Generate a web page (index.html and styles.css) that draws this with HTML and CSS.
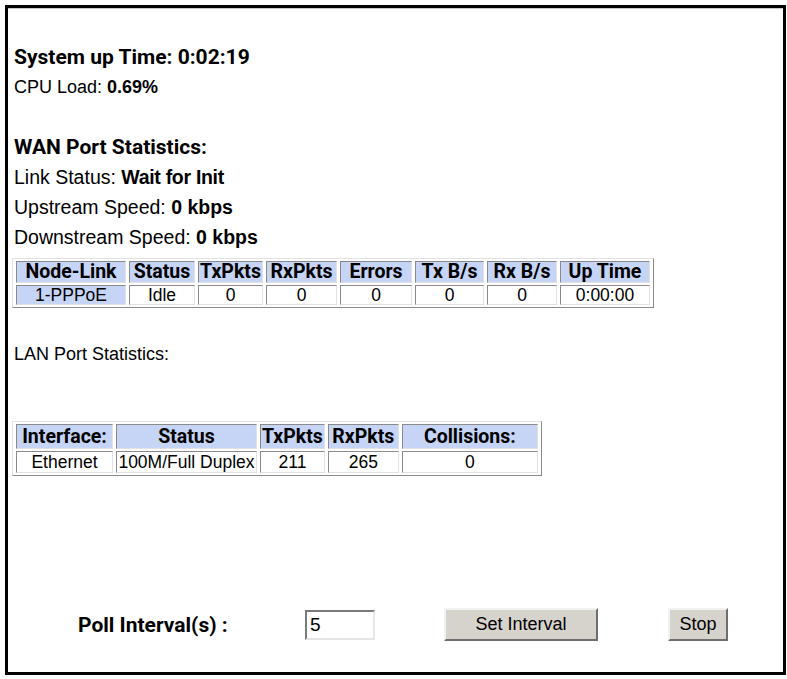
FILE: index.html
```html
<!DOCTYPE html>
<html lang="en">

<head>
    <meta charset="UTF-8">
    <title>Status</title>
    <link rel="stylesheet" href="styles.css">
</head>

<body>
    <div class="quadro">
        <p class="titulo">System up Time: 0:02:19</p>
        <p class="linha pequena">CPU Load: <b>0.69%</b></p>
        <p class="titulo espaco">WAN Port Statistics:</p>
        <p class="linha">Link Status: <b class="forte">Wait for Init</b></p>
        <p class="linha">Upstream Speed: <b>0 kbps</b></p>
        <p class="linha">Downstream Speed: <b>0 kbps</b></p>
        <table class="tabela">
            <thead>
                <tr>
                    <th class="w110">Node-Link</th>
                    <th class="w66">Status</th>
                    <th class="w65">TxPkts</th>
                    <th class="w71">RxPkts</th>
                    <th class="w72">Errors</th>
                    <th class="w69">Tx B/s</th>
                    <th class="w70">Rx B/s</th>
                    <th class="w90">Up Time</th>
                </tr>
            </thead>
            <tbody>
                <tr>
                    <td class="azul">1-PPPoE</td>
                    <td>Idle</td>
                    <td>0</td>
                    <td>0</td>
                    <td>0</td>
                    <td>0</td>
                    <td>0</td>
                    <td>0:00:00</td>
                </tr>
            </tbody>
        </table>
        <p class="linha pequena lan">LAN Port Statistics:</p>
        <table class="tabela tabela-lan">
            <thead>
                <tr>
                    <th class="w97">Interface:</th>
                    <th class="w141">Status</th>
                    <th class="w63">TxPkts</th>
                    <th class="w71">RxPkts</th>
                    <th class="w136">Collisions:</th>
                </tr>
            </thead>
            <tbody>
                <tr>
                    <td>Ethernet</td>
                    <td>100M/Full Duplex</td>
                    <td>211</td>
                    <td>265</td>
                    <td>0</td>
                </tr>
            </tbody>
        </table>
        <div class="poll">
            <span class="poll-rotulo">Poll Interval(s) :</span>
            <input type="text" class="poll-campo" value="5">
            <button class="botao botao-intervalo">Set Interval</button>
            <button class="botao botao-parar">Stop</button>
        </div>
    </div>
</body>

</html>
```

FILE: styles.css
```css
body {
    margin: 0;
    background-color: #fff;
    font-family: "Liberation Sans", Arial, sans-serif;
    color: #000;
}

.quadro {
    box-sizing: border-box;
    width: 781px;
    height: 670px;
    margin: 5px 0 0 5px;
    padding: 34px 0 0 4px;
    border: 3px solid #000;
    box-shadow: inset 0 1px 0 #c8c8c8;
}

p {
    margin: 0;
    padding-left: 2px;
}

.titulo {
    font-family: Roboto, "Liberation Sans", sans-serif;
    font-size: 21px;
    font-weight: bold;
    line-height: 30px;
}

.espaco {
    margin-top: 30px;
}

.linha {
    font-size: 19.5px;
    line-height: 30px;
}

.pequena {
    font-size: 18px;
}

.forte {
    letter-spacing: -0.3px;
}

.lan {
    margin-top: 31px;
}

.tabela {
    margin-top: 6px;
    border-collapse: separate;
    border-spacing: 3px 2px;
    border: 1px solid;
    border-color: #e2e2e2 #8a8a8a #8a8a8a #e2e2e2;
}

.tabela th,
.tabela td {
    box-sizing: border-box;
    padding: 0 1px;
    border: 1px solid;
    border-color: #8a8a8a #e2e2e2 #e2e2e2 #8a8a8a;
    text-align: center;
    white-space: nowrap;
}

.tabela th {
    height: 22px;
    background-color: #c6d4f6;
    font-family: Roboto, "Liberation Sans", sans-serif;
    font-size: 19.5px;
    line-height: 20px;
}

.tabela td {
    height: 20px;
    font-size: 17.5px;
    line-height: 18px;
}

.tabela .azul {
    background-color: #c6d4f6;
}

.tabela-lan {
    margin-top: 52px;
}

.tabela-lan th {
    height: 25px;
}

.tabela-lan td {
    height: 22px;
}

.w63 { width: 63px; }
.w65 { width: 65px; }
.w66 { width: 66px; }
.w69 { width: 69px; }
.w70 { width: 70px; }
.w71 { width: 71px; }
.w72 { width: 72px; }
.w90 { width: 90px; }
.w97 { width: 97px; }
.w110 { width: 110px; }
.w136 { width: 136px; }
.w141 { width: 141px; }

.poll {
    display: flex;
    align-items: center;
    margin-top: 132px;
    padding-left: 66px;
}

.poll-rotulo {
    width: 227px;
    font-family: Roboto, "Liberation Sans", sans-serif;
    font-size: 21px;
    font-weight: bold;
}

.poll-campo {
    box-sizing: border-box;
    width: 70px;
    height: 30px;
    padding: 0 3px;
    border: 2px solid;
    border-color: #7a7a7a #e6e6e6 #e6e6e6 #7a7a7a;
    font-family: "Liberation Sans", Arial, sans-serif;
    font-size: 19px;
}

.botao {
    box-sizing: border-box;
    height: 33px;
    padding: 0;
    background-color: #d6d3cc;
    border: 2px solid;
    border-color: #f2f2f2 #6e6e6e #6e6e6e #f2f2f2;
    font-family: "Liberation Sans", Arial, sans-serif;
    font-size: 18px;
    color: #000;
}

.botao-intervalo {
    width: 154px;
    margin-left: 69px;
}

.botao-parar {
    width: 60px;
    margin-left: 70px;
}
```
